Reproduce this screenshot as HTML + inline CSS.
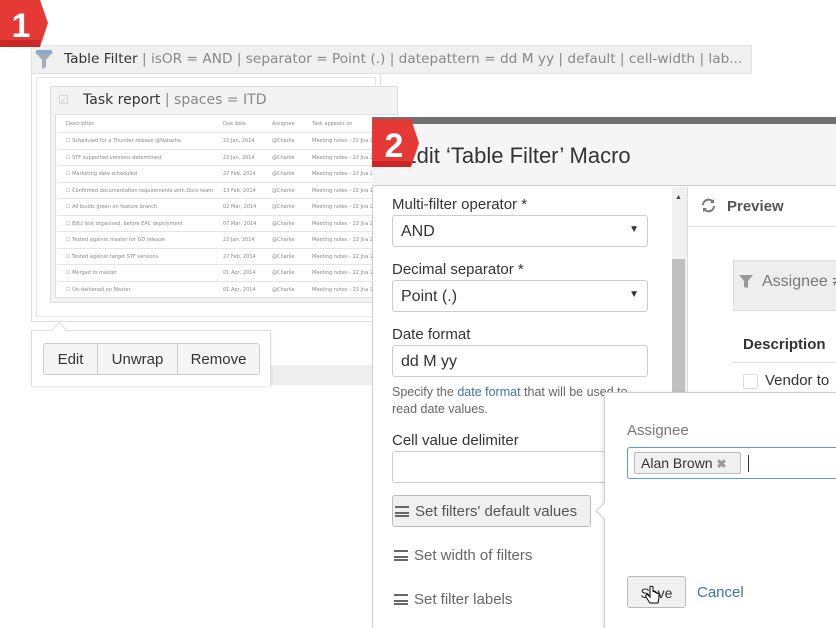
<!DOCTYPE html>
<html><head><meta charset="utf-8"><style>
*{box-sizing:border-box;margin:0;padding:0}
body{width:836px;height:628px;overflow:hidden;background:#fff;font-family:"Liberation Sans",Arial,sans-serif;position:relative}
.a{position:absolute}
.dv{font-family:"DejaVu Sans",sans-serif}
.tr{position:absolute;left:58px;width:340px;height:16.5px;border-top:1px solid #e4e4e4;font-size:5px;color:#888;font-family:"DejaVu Sans",sans-serif}
.tr span{position:absolute;top:5px;white-space:nowrap}
.lbl{position:absolute;left:392px;font-size:15px;color:#333}
.inp{position:absolute;left:392px;width:256px;height:32px;border:1px solid #ccc;border-radius:3px;background:#fff;font-size:16px;color:#333;padding:7px 0 0 8px}
.car{position:absolute;right:8px;top:8px;font-size:10px;color:#333}
.ham{display:inline-block;width:14px;height:11px;border-top:2px solid #666;border-bottom:2px solid #666;position:relative;vertical-align:-1px;margin-right:6px}
.ham:after{content:"";position:absolute;left:0;right:0;top:3.5px;height:2px;background:#666}
</style></head><body>
<!-- Table filter macro -->
<div class="a" style="left:31px;top:45px;width:721px;height:29px;background:#f0f0f0;border:1px solid #e2e2e2"></div>
<svg class="a" style="left:33px;top:48px" width="22" height="22" viewBox="0 0 22 22"><path d="M2 4h18l-7 8v7l-4 2v-9z" fill="#aab"/><rect x="3" y="2" width="16" height="4" rx="1" fill="#8ac"/></svg>
<div class="a dv" style="left:64px;top:51px;font-size:13.7px;color:#333;white-space:nowrap">Table Filter <span style="color:#888">| isOR = AND | separator = Point (.) | datepattern = dd M yy | default | cell-width | lab...</span></div>
<div class="a" style="left:31px;top:74px;width:350px;height:248px;border:1px solid #ddd;border-top:none;background:#fff"></div>
<div class="a" style="left:36px;top:77px;width:340px;height:240px;border:1px solid #e6e6e6"></div>
<div class="a" style="left:50px;top:86px;width:348px;height:217px;background:#f3f3f3;border:1px solid #ddd"></div>
<div class="a" style="left:58px;top:93px;font-size:12px;color:#ccc">☑</div>
<div class="a dv" style="left:83px;top:92px;font-size:14px;color:#333;white-space:nowrap">Task report <span style="color:#888">| spaces = ITD</span></div>
<div class="a" style="left:55px;top:114px;width:343px;height:184px;background:#fff;border:1px solid #e0e0e0"></div>
<div class="tr" style="top:116px;border:none"><span style="left:8px">Description</span><span style="left:165px">Due date</span><span style="left:214px">Assignee</span><span style="left:254px">Task appears on</span></div>
<div class="tr" style="top:132px"><span style="left:8px">☐ Scheduled for a Thunder release @Natasha</span><span style="left:165px">22 Jan, 2014</span><span style="left:214px">@Charlie</span><span style="left:254px">Meeting notes - 22 Jna 2</span></div>
<div class="tr" style="top:148.5px"><span style="left:8px">☐ STF supported versions determined</span><span style="left:165px">22 Jan, 2014</span><span style="left:214px">@Charlie</span><span style="left:254px">Meeting notes - 22 Jna 2</span></div>
<div class="tr" style="top:165px"><span style="left:8px">☐ Marketing date scheduled</span><span style="left:165px">27 Feb, 2014</span><span style="left:214px">@Charlie</span><span style="left:254px">Meeting notes - 22 Jna 2</span></div>
<div class="tr" style="top:181.5px"><span style="left:8px">☐ Confirmed documentation requirements with Docs team</span><span style="left:165px">13 Feb, 2014</span><span style="left:214px">@Charlie</span><span style="left:254px">Meeting notes - 22 Jna 2</span></div>
<div class="tr" style="top:198px"><span style="left:8px">☐ All builds green on feature branch</span><span style="left:165px">02 Mar, 2014</span><span style="left:214px">@Charlie</span><span style="left:254px">Meeting notes - 22 Jna 2</span></div>
<div class="tr" style="top:214.5px"><span style="left:8px">☐ Blitz test organised, before EAC deployment</span><span style="left:165px">07 Mar, 2014</span><span style="left:214px">@Charlie</span><span style="left:254px">Meeting notes - 22 Jna 2</span></div>
<div class="tr" style="top:231px"><span style="left:8px">☐ Tested against master for GD release</span><span style="left:165px">22 Jan, 2014</span><span style="left:214px">@Charlie</span><span style="left:254px">Meeting notes - 22 Jna 2</span></div>
<div class="tr" style="top:247.5px"><span style="left:8px">☐ Tested against target STF versions</span><span style="left:165px">27 Feb, 2014</span><span style="left:214px">@Charlie</span><span style="left:254px">Meeting notes - 22 Jna 2</span></div>
<div class="tr" style="top:264px"><span style="left:8px">☐ Merged to master</span><span style="left:165px">01 Apr, 2014</span><span style="left:214px">@Charlie</span><span style="left:254px">Meeting notes - 22 Jna 2</span></div>
<div class="tr" style="top:280.5px"><span style="left:8px">☐ Un-darkened on Master</span><span style="left:165px">01 Apr, 2014</span><span style="left:214px">@Charlie</span><span style="left:254px">Meeting notes - 22 Jna 2</span></div>
<!-- edit popup -->
<div class="a" style="left:31px;top:365px;width:341px;height:20px;background:#eee"></div>
<div class="a" style="left:31px;top:330px;width:240px;height:56px;background:#fff;border:1px solid #ddd;border-bottom:none;box-shadow:0 1px 3px rgba(0,0,0,.1)"></div>
<div class="a" style="left:54px;top:324px;width:10px;height:10px;background:#fff;border-left:1px solid #ddd;border-top:1px solid #ddd;transform:rotate(45deg)"></div>
<div class="a" style="left:43px;top:343px;width:217px;height:32px;border:1px solid #ccc;border-radius:3px;background:#f5f5f5;display:flex;font-size:15px;color:#333">
<div style="width:54px;text-align:center;padding-top:7px;border-right:1px solid #ccc">Edit</div>
<div style="width:80px;text-align:center;padding-top:7px;border-right:1px solid #ccc">Unwrap</div>
<div style="flex:1;text-align:center;padding-top:7px">Remove</div></div>
<!-- dialog -->
<div class="a" style="left:372px;top:117px;width:464px;height:511px;background:#fff;border-left:1px solid #ccc"></div>
<div class="a" style="left:372px;top:117px;width:464px;height:7px;background:#707070"></div>
<div class="a" style="left:372px;top:124px;width:464px;height:62px;background:#f5f5f5;border-bottom:1px solid #ccc"></div>
<div class="a" style="left:402px;top:143px;font-size:22px;color:#333;white-space:nowrap">Edit ‘Table Filter’ Macro</div>
<div class="a" style="left:672px;top:187px;width:15px;height:441px;background:#f0f0f0"></div>
<div class="a" style="left:672px;top:259px;width:13px;height:369px;background:#c0c0c0"></div>
<div class="a" style="left:675px;top:194px;font-size:7px;color:#444">▲</div>
<div class="a" style="left:687px;top:187px;width:149px;height:441px;border-left:1px solid #ddd"></div>
<div class="a" style="left:687px;top:226px;width:149px;height:1px;background:#ddd"></div>
<svg class="a" style="left:700px;top:197px" width="17" height="17" viewBox="0 0 17 17"><path d="M3 8a5.5 5.5 0 0 1 10-3M14 9a5.5 5.5 0 0 1-10 3" stroke="#777" stroke-width="2" fill="none"/><path d="M14 2v4h-4M3 15v-4h4" fill="#777"/></svg>
<div class="a" style="left:727px;top:198px;font-size:15px;font-weight:bold;color:#555">Preview</div>
<div class="a" style="left:733px;top:260px;width:103px;height:51px;background:#eee;border:1px solid #ddd;border-right:none"></div>
<svg class="a" style="left:738px;top:273px" width="16" height="16" viewBox="0 0 16 16"><path d="M1 2h14l-5 6v7l-4-1v-6z" fill="#999"/></svg>
<div class="a" style="left:762px;top:273px;font-size:16px;color:#777;white-space:nowrap">Assignee ≠</div>
<div class="a" style="left:743px;top:336px;font-size:15px;font-weight:bold;color:#333">Description</div>
<div class="a" style="left:733px;top:362px;width:103px;height:1px;background:#ddd"></div>
<div class="a" style="left:743px;top:374px;width:15px;height:15px;border:1px solid #ddd;border-radius:2px"></div>
<div class="a" style="left:765px;top:372px;font-size:15px;color:#333;white-space:nowrap">Vendor to</div>
<!-- form -->
<div class="lbl" style="top:196px">Multi-filter operator *</div>
<div class="inp" style="top:215px">AND<span class="car">▼</span></div>
<div class="lbl" style="top:261px">Decimal separator *</div>
<div class="inp" style="top:280px">Point (.)<span class="car">▼</span></div>
<div class="lbl" style="top:326px">Date format</div>
<div class="inp" style="top:345px">dd M yy</div>
<div class="a" style="left:392px;top:384px;font-size:12.5px;color:#666;line-height:17px;width:260px">Specify the <span style="color:#3b73af">date format</span> that will be used to read date values.</div>
<div class="lbl" style="top:432px">Cell value delimiter</div>
<div class="inp" style="top:451px"></div>
<div class="a" style="left:392px;top:495px;width:199px;height:32px;background:#f0f0f0;border:1px solid #bbb;border-radius:3px;font-size:15px;color:#555;padding:7px 0 0 2px;white-space:nowrap"><span class="ham"></span>Set filters' default values</div>
<div class="a" style="left:394px;top:547px;font-size:15px;color:#666;white-space:nowrap"><span class="ham"></span>Set width of filters</div>
<div class="a" style="left:394px;top:591px;font-size:15px;color:#666;white-space:nowrap"><span class="ham"></span>Set filter labels</div>
<!-- popover -->
<div class="a" style="left:604px;top:392px;width:232px;height:236px;background:#fff;border:1px solid #ccc;border-right:none;border-bottom:none;box-shadow:-1px 1px 4px rgba(0,0,0,.12)"></div>
<div class="a" style="left:598px;top:505px;width:12px;height:12px;background:#fff;border-left:1px solid #ccc;border-bottom:1px solid #ccc;transform:rotate(45deg)"></div>
<div class="a" style="left:627px;top:422px;font-size:15px;color:#777">Assignee</div>
<div class="a" style="left:627px;top:447px;width:209px;height:32px;border:1px solid #5b9bd5;border-right:none;border-radius:3px 0 0 3px"></div>
<div class="a" style="left:634px;top:452px;width:107px;height:22px;background:#f0f0f0;border:1px solid #bbb;border-radius:2px;font-size:14px;color:#333;padding:2px 0 0 6px;white-space:nowrap">Alan Brown <span style="color:#999;font-weight:bold;font-size:12px">✖</span></div>
<div class="a" style="left:748px;top:455px;width:1px;height:17px;background:#333"></div>
<div class="a" style="left:627px;top:576px;width:59px;height:32px;background:#f0f0f0;border:1px solid #bbb;border-radius:3px;font-size:14px;color:#333;text-align:center;padding-top:8px">Save</div>
<div class="a" style="left:697px;top:584px;font-size:15px;color:#3b73af">Cancel</div>
<svg class="a" style="left:645px;top:585px" width="16" height="22" viewBox="0 0 16 22"><path d="M5 2v10l-2-2c-1-1-3 0-2 2l4 6h8l1-6V9c0-1-2-1-2 0V8c0-1-2-1-2 0V7c0-1-2-1-2 0V2c0-1-3-1-3 0z" fill="#fff" stroke="#000"/></svg>
<!-- badges -->
<svg class="a" style="left:0;top:0" width="52" height="50" viewBox="0 0 52 50"><path d="M0 0h40l8 23-8 24H0z" fill="#e53935"/><path d="M0 40h40l-0 7H0z" fill="#b71c1c" opacity=".6"/><text x="21" y="37" font-family="Liberation Sans" font-weight="bold" font-size="34" fill="#fff" text-anchor="middle">1</text></svg>
<svg class="a" style="left:372px;top:119px" width="50" height="52" viewBox="0 0 50 52"><path d="M0 0h39l8 24-8 24H0z" fill="#e53935"/><path d="M0 42h39v6H0z" fill="#b71c1c" opacity=".6"/><text x="22" y="38" font-family="Liberation Sans" font-weight="bold" font-size="34" fill="#fff" text-anchor="middle">2</text></svg>
</body></html>
